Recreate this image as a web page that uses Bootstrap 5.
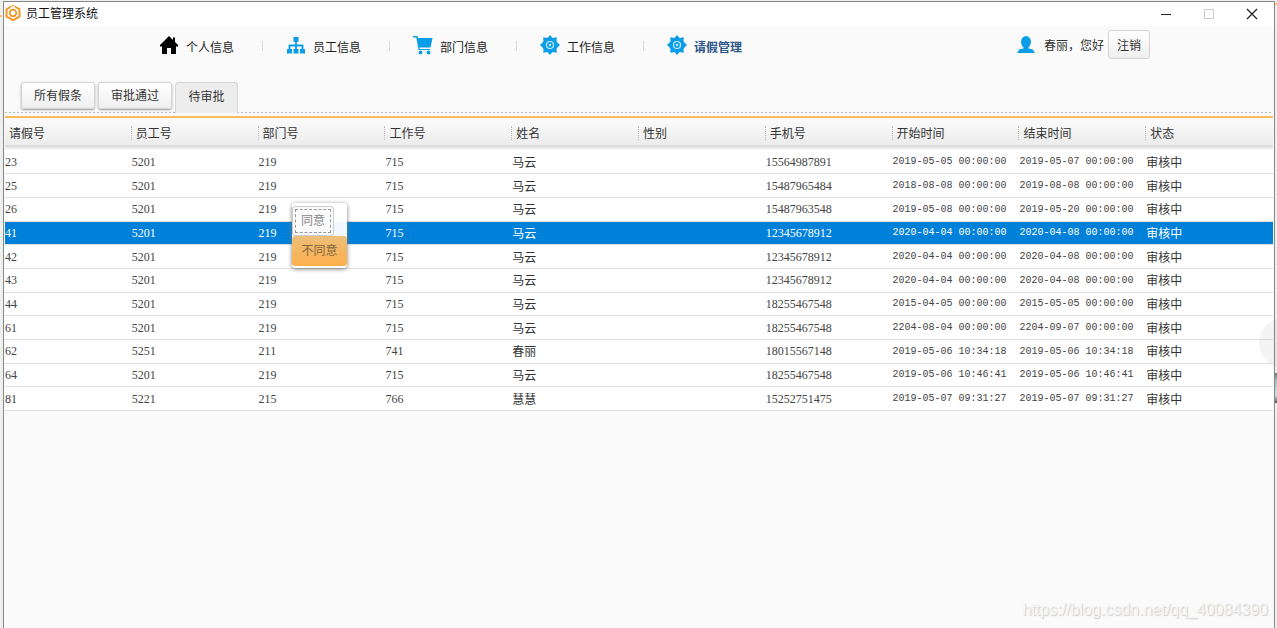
<!DOCTYPE html>
<html lang="zh-CN">
<head>
<meta charset="utf-8">
<meta name="viewport" content="width=device-width, initial-scale=1">
<title>员工管理系统</title>
<link href="https://cdn.jsdelivr.net/npm/bootstrap@5.3.0/dist/css/bootstrap.min.css" rel="stylesheet">
<style>
body{font:12px/16px "Noto Sans CJK SC",sans-serif;color:#333;background:#fafafa}
.desktop{overflow:hidden;padding:1px 2px 0 3px;background:linear-gradient(#ffc266,#ffc266) right 3px/2px 2px no-repeat,linear-gradient(#ffc266,#ffc266) left 15px/2px 2px no-repeat,linear-gradient(#6b7577,#a9c4c4 8px,#d5e0e0 22px,#555 30px) right 373px/2px 30px no-repeat,#edf0ef}
.window{border:1px solid #858988;border-bottom:0;background:#fafafa;min-height:calc(100vh - 1px)}
.titlebar{height:24px;padding:0 1px;background:#fff;color:#111}
.titlebar button{width:43px;height:24px;padding:0 0 3px;border:0;background:none}
.titlebar .caption{padding:0 0 2px 5px}
.titlebar .emblem{margin-bottom:2px}
.toolbar{height:56px;padding:4px 124px 0 155px}
.menu-item{width:127px;height:30px;color:#222;text-decoration:none}
.menu-item svg{width:20px;height:20px}
.menu-item span{padding:3px 0 0 7px}
.menu-item + .menu-item{position:relative}
.menu-item + .menu-item::before{content:"";position:absolute;left:-24px;top:11px;width:1px;height:10px;background:#ddd8df}
.menu-item.active{color:#2d5689;font-weight:700}
.soft{border:1px solid #d5d5d5;border-radius:3px;background:linear-gradient(#fff,#efefef);color:#333;font-size:12px;padding:0}
.logout{width:42px;height:29px}
.tabs{height:31px;margin:0 1px;padding-left:16px;gap:3px;background:repeating-linear-gradient(90deg,#b8b8b8 0 2px,transparent 2px 4px) bottom/100% 1px no-repeat}
.tabs .soft{width:74px;height:27px;padding-bottom:2px;box-shadow:0 1px 2px #999}
.tabs .soft.active{width:63px;height:31px;padding-bottom:5px;background:#ededed;border-bottom:0;border-radius:4px 4px 0 0;box-shadow:none}
.leave{table-layout:fixed;height:295px;margin:3px 1px 0;width:calc(100% - 2px);background:#fff}
.leave th{height:33px;padding:0 0 2px 4px;font-weight:400;border-top:2px solid #fdbb5a;background:linear-gradient(#fbfbfb,#ececec 27px,#d9d9d9 27px,#e0e0e0 29px,#fff 32px)}
.leave th span{display:block;position:relative}
.leave th + th span::before{content:"";position:absolute;left:-5px;top:1px;height:14px;border-left:1px dotted #bbb}
.leave thead tr th:first-child{border-top-left-radius:4px}
.leave thead tr th:last-child{border-top-right-radius:4px}
.leave td{height:23px;padding:0;line-height:16px;border-bottom:1px solid #dedede;white-space:nowrap}
.leave td.num{color:#444;font-family:"Liberation Serif",serif}
.leave td.stamp{color:#444;font:10px/16px "Liberation Mono",monospace;padding-top:1px}
.leave tr.selected td{background:#0081d9;color:#fff}
.popup{left:292px;top:203px;width:55px;padding:3px 0 2px;border-radius:4px;background:rgba(255,255,255,.94);box-shadow:0 1px 4px #777}
.popup button{display:block;height:30px;padding:0;border:0;color:#888;font:12px/16px "Liberation Serif","Noto Sans CJK SC",serif}
.popup .agree{width:42px;border:1px solid #ccc;border-radius:3px;background:#fafafa;outline:1px dashed #999;outline-offset:-4px}
.popup .deny{width:55px;color:#83633b;border-radius:3px;background:linear-gradient(#ecbf7b,#fcb04c)}
.handle{right:-32px;top:318px;width:50px;height:50px;border-radius:50%;background:rgba(120,120,120,.08)}
.watermark{right:9px;bottom:8px;font:16px/20px "Liberation Sans",sans-serif;color:#f4f4f4;text-shadow:1px 1px 1px #ccc}
</style>
<script src="https://cdn.jsdelivr.net/npm/bootstrap@5.3.0/dist/js/bootstrap.bundle.min.js"></script>
</head>
<body>
<div class="desktop position-relative min-vh-100">
<div class="window">
 <header class="titlebar d-flex align-items-center">
  <svg class="emblem" width="16" height="16" viewBox="0 0 16 16" fill="none" stroke="#f7931e"><path d="M5.500 2 1.500 4.300v7.400L8 15.200l6.500-3.500V4.300L10.500 2" stroke-width="1.900"/><circle cx="8" cy="8" r="3.300" stroke-width="1.700"/><path d="M5 1.700 8 .5l3 1.200" stroke-width="1"/></svg>
  <span class="caption me-auto">员工管理系统</span>
  <button type="button" aria-label="最小化"><svg width="12" height="12" stroke="#222"><path d="M1 6.500h10"/></svg></button>
  <button type="button" aria-label="最大化" disabled><svg width="12" height="12" fill="none" stroke="#ccc"><path d="M1.500 1.500h9v9h-9z"/></svg></button>
  <button type="button" aria-label="关闭"><svg width="12" height="12" stroke="#222" stroke-width="1.300"><path d="m1 1 10 10M11 1 1 11"/></svg></button>
 </header>
 <div class="toolbar d-flex align-items-start">
  <nav class="d-flex">
   <a class="menu-item d-flex align-items-center" href="#"><svg viewBox="0 0 20 20"><path d="M10 1 1 10v1.500h2V19h5v-6h4v6h5v-7.500h2V10l-3-3V2.500h-2V5z" fill="#000"/></svg><span>个人信息</span></a>
   <a class="menu-item d-flex align-items-center" href="#"><svg viewBox="0 0 20 20" fill="#0b9ee8"><path d="M7.500 2h5v5h-5zM1 14h5v4.500H1zM7.500 14h5v4.500h-5zM14 14h5v4.500h-5z"/><path d="M10 6v9M3.500 15v-4.500h13V15" fill="none" stroke="#0b9ee8" stroke-width="1.800"/></svg><span>员工信息</span></a>
   <a class="menu-item d-flex align-items-center" href="#"><svg viewBox="0 0 20 20" fill="#0b9ee8"><path d="M0 1h4.500l.5 2h14.500l-2 9.500H6.300l.4 1.500H17v1H5.500L3.300 2.500H0z"/><circle cx="7.500" cy="17.500" r="1.900"/><circle cx="15.500" cy="17.500" r="1.900"/></svg><span>部门信息</span></a>
   <a class="menu-item d-flex align-items-center" href="#"><svg viewBox="0 0 20 20"><g id="cog"><path d="m10 0 2.500 3 4.300-.8-.4 4.400L20 10l-3.600 3.400.4 4.400-4.300-.8L10 20l-2.500-3-4.300.8.4-4.400L0 10l3.600-3.400-.4-4.400 4.300.8z" fill="#0b9ee8"/><circle cx="10" cy="10" r="7.600" fill="#0b9ee8"/><circle cx="10" cy="10" r="3.500" fill="none" stroke="#c8ecff" stroke-width="1.200"/><circle cx="10" cy="10" r="1.200" fill="#c8ecff"/></g></svg><span>工作信息</span></a>
   <a class="menu-item d-flex align-items-center active" aria-current="page" href="#"><svg viewBox="0 0 20 20"><use href="#cog"/></svg><span>请假管理</span></a>
  </nav>
  <div class="d-flex align-items-center ms-auto">
   <svg width="20" height="20" viewBox="0 0 20 20" fill="#0b9ee8"><ellipse cx="10" cy="7" rx="5" ry="6"/><path d="M7.500 11h5v2.500l4 .8L19 18H1l2.500-3.700 4-.8z"/></svg>
   <span class="ms-2">春丽，您好</span>
   <button type="button" class="soft logout ms-1">注销</button>
  </div>
 </div>
 <div class="tabs d-flex align-items-start" role="tablist">
  <button type="button" role="tab" class="soft">所有假条</button>
  <button type="button" role="tab" class="soft">审批通过</button>
  <button type="button" role="tab" class="soft active" aria-selected="true">待审批</button>
 </div>
 <table class="leave">
  <thead><tr><th><span>请假号</span></th><th><span>员工号</span></th><th><span>部门号</span></th><th><span>工作号</span></th><th><span>姓名</span></th><th><span>性别</span></th><th><span>手机号</span></th><th><span>开始时间</span></th><th><span>结束时间</span></th><th><span>状态</span></th></tr></thead>
  <tbody>
   <tr><td class="num">23</td><td class="num">5201</td><td class="num">219</td><td class="num">715</td><td>马云</td><td></td><td class="num">15564987891</td><td class="stamp">2019-05-05 00:00:00</td><td class="stamp">2019-05-07 00:00:00</td><td>审核中</td></tr>
   <tr><td class="num">25</td><td class="num">5201</td><td class="num">219</td><td class="num">715</td><td>马云</td><td></td><td class="num">15487965484</td><td class="stamp">2018-08-08 00:00:00</td><td class="stamp">2019-08-08 00:00:00</td><td>审核中</td></tr>
   <tr><td class="num">26</td><td class="num">5201</td><td class="num">219</td><td class="num">715</td><td>马云</td><td></td><td class="num">15487963548</td><td class="stamp">2019-05-08 00:00:00</td><td class="stamp">2019-05-20 00:00:00</td><td>审核中</td></tr>
   <tr class="selected"><td class="num">41</td><td class="num">5201</td><td class="num">219</td><td class="num">715</td><td>马云</td><td></td><td class="num">12345678912</td><td class="stamp">2020-04-04 00:00:00</td><td class="stamp">2020-04-08 00:00:00</td><td>审核中</td></tr>
   <tr><td class="num">42</td><td class="num">5201</td><td class="num">219</td><td class="num">715</td><td>马云</td><td></td><td class="num">12345678912</td><td class="stamp">2020-04-04 00:00:00</td><td class="stamp">2020-04-08 00:00:00</td><td>审核中</td></tr>
   <tr><td class="num">43</td><td class="num">5201</td><td class="num">219</td><td class="num">715</td><td>马云</td><td></td><td class="num">12345678912</td><td class="stamp">2020-04-04 00:00:00</td><td class="stamp">2020-04-08 00:00:00</td><td>审核中</td></tr>
   <tr><td class="num">44</td><td class="num">5201</td><td class="num">219</td><td class="num">715</td><td>马云</td><td></td><td class="num">18255467548</td><td class="stamp">2015-04-05 00:00:00</td><td class="stamp">2015-05-05 00:00:00</td><td>审核中</td></tr>
   <tr><td class="num">61</td><td class="num">5201</td><td class="num">219</td><td class="num">715</td><td>马云</td><td></td><td class="num">18255467548</td><td class="stamp">2204-08-04 00:00:00</td><td class="stamp">2204-09-07 00:00:00</td><td>审核中</td></tr>
   <tr><td class="num">62</td><td class="num">5251</td><td class="num">211</td><td class="num">741</td><td>春丽</td><td></td><td class="num">18015567148</td><td class="stamp">2019-05-06 10:34:18</td><td class="stamp">2019-05-06 10:34:18</td><td>审核中</td></tr>
   <tr><td class="num">64</td><td class="num">5201</td><td class="num">219</td><td class="num">715</td><td>马云</td><td></td><td class="num">18255467548</td><td class="stamp">2019-05-06 10:46:41</td><td class="stamp">2019-05-06 10:46:41</td><td>审核中</td></tr>
   <tr><td class="num">81</td><td class="num">5221</td><td class="num">215</td><td class="num">766</td><td>慧慧</td><td></td><td class="num">15252751475</td><td class="stamp">2019-05-07 09:31:27</td><td class="stamp">2019-05-07 09:31:27</td><td>审核中</td></tr>
  </tbody>
 </table>
</div>
<div class="popup position-absolute"><button type="button" class="agree">同意</button><button type="button" class="deny">不同意</button></div>
<div class="handle position-absolute"></div>
<div class="watermark position-absolute">https://blog.csdn.net/qq_40084390</div>
</div>
</body>
</html>
